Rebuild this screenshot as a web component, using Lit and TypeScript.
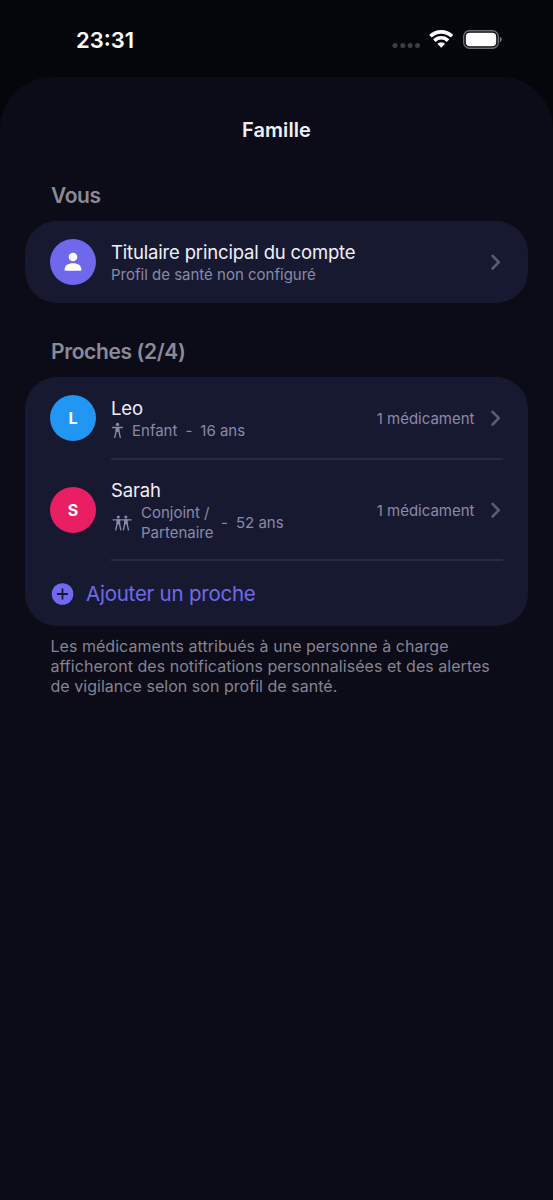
import { LitElement, html, css, svg } from "lit";
import { customElement } from "lit/decorators.js";

interface Person {
  name: string;
  initial: string;
  color: string;
  relation: string;
  age: string;
  kind: "child" | "partner";
}

const people: Person[] = [
  { name: "Leo", initial: "L", color: "#2196f3", relation: "Enfant", age: "16 ans", kind: "child" },
  { name: "Sarah", initial: "S", color: "#e91e63", relation: "Conjoint / Partenaire", age: "52 ans", kind: "partner" },
];

const chevron = html`<svg class="chevron" width="12" height="18" viewBox="0 0 12 18">
  <path d="M1.6 2.9 L7.8 9.2 L1.6 15.5" fill="none" stroke="#5b5d70" stroke-width="2.6" stroke-linecap="round" stroke-linejoin="round" />
</svg>`;

const childIcon = html`<svg width="13" height="17" viewBox="0 0 13 17">
  <circle cx="6.5" cy="2.4" r="1.7" fill="#8a89a8" />
  <path d="M1.6 5.5H11.4" stroke="#8a89a8" stroke-width="1.3" stroke-linecap="round" />
  <path d="M4.5 5.2H8.5V9.8H4.5Z" fill="#8a89a8" />
  <path d="M5.2 9.2L3.7 15.4M7.8 9.2L9.3 15.4" fill="none" stroke="#8a89a8" stroke-width="1.4" stroke-linecap="round" />
</svg>`;

const figure = (x: number) => svg`<g transform="translate(${x} 0)">
  <circle cx="0" cy="2" r="1.5" fill="#8a89a8" />
  <path d="M-1.9 4.4H1.9V9.4H-1.9Z" fill="#8a89a8" />
  <path d="M-1.2 8.8L-2.5 14.8M1.2 8.8L2.5 14.8" fill="none" stroke="#8a89a8" stroke-width="1.4" stroke-linecap="round" />
</g>`;

const partnerIcon = html`<svg width="22" height="16" viewBox="0 0 22 16">
  <path d="M2 4.8H20.2" stroke="#8a89a8" stroke-width="1.3" stroke-linecap="round" />
  ${figure(7.3)}${figure(14.9)}
</svg>`;

@customElement("app-root")
export class AppRoot extends LitElement {
  static styles = css`
    :host {
      display: block;
      height: 1200px;
      overflow: hidden;
      background: #04060b;
      color: #f0f0f8;
      font-family: Inter, "Liberation Sans", sans-serif;
    }
    * { box-sizing: border-box; }
    svg { display: block; flex: none; }
    .status { display: flex; align-items: center; height: 77px; padding: 2px 50px 0 76px; }
    .time { font-size: 22px; font-weight: 600; color: #fff; flex: 1; }
    .sheet { height: 1123px; border-radius: 52px 52px 0 0; background: #0c0b18; padding: 40px 25px 0; }
    .title { font-size: 20px; font-weight: 600; line-height: 26px; letter-spacing: 0.1px; text-align: center; }
    .section { font-size: 21px; font-weight: 600; line-height: 26px; letter-spacing: -0.37px; color: #8b8a98; padding-left: 26px; }
    .s1 { margin: 40px 0 12px; }
    .s2 { margin: 36px 0 12px; }
    .card { background: #171931; border-radius: 32px; padding: 0 25px; }
    .row { display: flex; align-items: center; height: 82px; }
    .people .row { height: 83px; }
    .people .tall { height: 101px; }
    .people .avatar { margin-bottom: 2px; }
    .avatar { width: 46px; height: 46px; border-radius: 50%; display: flex; align-items: center; justify-content: center; color: #fff; font-size: 16px; font-weight: 700; flex: none; }
    .body { display: flex; align-items: center; align-self: stretch; flex: 1; margin-left: 15px; }
    .line { border-bottom: 2px solid #292a3f; padding-top: 1px; }
    .info { flex: 1; }
    .name { font-size: 18.5px; line-height: 24px; letter-spacing: -0.17px; color: #f0f0fa; }
    .sub { font-size: 15px; line-height: 20px; color: #8a89a8; margin-top: 1px; }
    .meta { display: flex; align-items: center; gap: 8px; }
    .count { font-size: 15px; color: #8a89a8; margin-right: 16.5px; }
    .relation.partner { width: 72px; }
    .add { display: flex; align-items: center; height: 65px; color: #7169ee; font-size: 20.5px; letter-spacing: -0.23px; gap: 11px; }
    .note { font-size: 16px; line-height: 20px; letter-spacing: 0.035px; color: #85848f; padding: 10px 25px 0 25.5px; }
  `;

  private person(p: Person) {
    return html`<div class="row ${p.kind === "partner" ? "tall" : ""}">
      <div class="avatar" style="background:${p.color}">${p.initial}</div>
      <div class="body line">
        <div class="info">
          <div class="name">${p.name}</div>
          <div class="sub meta">
            ${p.kind === "child" ? childIcon : partnerIcon}
            <span class="relation ${p.kind}">${p.relation}</span><span>-</span><span>${p.age}</span>
          </div>
        </div>
        <span class="count">1 médicament</span>${chevron}
      </div>
    </div>`;
  }

  render() {
    return html`
      <div class="status">
        <span class="time">23:31</span>
        <svg width="112" height="24" viewBox="391 28 112 24">
          <g fill="#3d3e43"><circle cx="395" cy="45.5" r="2.5" /><circle cx="402.8" cy="45.5" r="2.5" /><circle cx="410.2" cy="45.5" r="2.5" /><circle cx="417.5" cy="45.5" r="2.5" /></g>
          <g fill="none" stroke="#fff" stroke-width="3.6"><path d="M430.4 36.2A15.6 15.6 0 0 1 452 36.2" /><path d="M434.3 40.6A9.8 9.8 0 0 1 448.1 40.6" /></g>
          <path d="M441.2 47.8L437.3 43.8A5.7 5.7 0 0 1 445.1 43.8Z" fill="#fff" />
          <rect x="463.7" y="30.7" width="34.6" height="17.6" rx="5.8" fill="none" stroke="#6d6e72" stroke-width="1.4" />
          <rect x="465.8" y="32.8" width="30.4" height="13.4" rx="4" fill="#fff" />
          <path d="M499.8 36.8a3 3 0 0 1 0 5.6Z" fill="#77787c" />
        </svg>
      </div>
      <div class="sheet">
        <div class="title">Famille</div>
        <div class="section s1">Vous</div>
        <div class="card"><div class="row">
          <div class="avatar" style="background:#6f68ec">
            <svg width="20" height="22" viewBox="0 0 20 22"><circle cx="10" cy="6" r="4.3" fill="#fff" /><path d="M1.6 18.6C1.6 14.4 5.2 12.2 10 12.2S18.4 14.4 18.4 18.6Q18.4 19.8 17.2 19.8H2.8Q1.6 19.8 1.6 18.6Z" fill="#fff" /></svg>
          </div>
          <div class="body">
            <div class="info"><div class="name">Titulaire principal du compte</div><div class="sub">Profil de santé non configuré</div></div>
            ${chevron}
          </div>
        </div></div>
        <div class="section s2">Proches (2/4)</div>
        <div class="card people">
          ${people.map((p) => this.person(p))}
          <div class="add">
            <svg width="25" height="24" viewBox="0 0 25 24"><circle cx="12.5" cy="12" r="10.8" fill="#7169ee" /><path d="M12.5 7.2V16.8M7.7 12H17.3" stroke="#171931" stroke-width="1.8" stroke-linecap="round" /></svg>
            <span>Ajouter un proche</span>
          </div>
        </div>
        <div class="note">Les médicaments attribués à une personne à charge<br />afficheront des notifications personnalisées et des alertes<br />de vigilance selon son profil de santé.</div>
      </div>`;
  }
}
